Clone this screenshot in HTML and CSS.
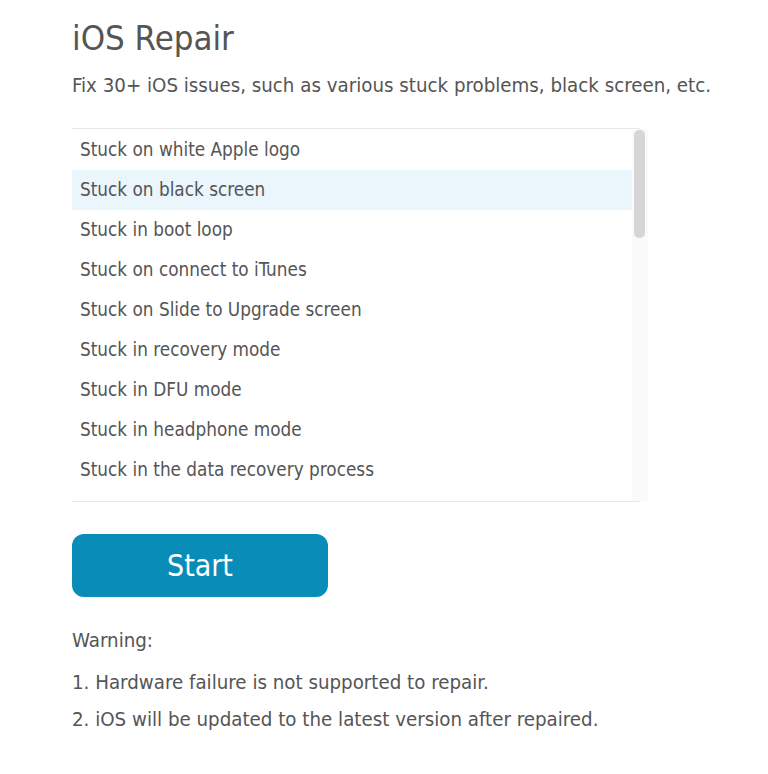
FILE: index.html
```html
<!DOCTYPE html>
<html>
<head>
<meta charset="utf-8">
<link rel="stylesheet" href="styles.css">
</head>
<body>
<div class="page">
  <h1 class="title">iOS Repair</h1>
  <p class="subtitle">Fix 30+ iOS issues, such as various stuck problems, black screen, etc.</p>
  <div class="list-frame">
    <div class="list-box">
      <ul class="list">
        <li class="item">Stuck on white Apple logo</li>
        <li class="item active">Stuck on black screen</li>
        <li class="item">Stuck in boot loop</li>
        <li class="item">Stuck on connect to iTunes</li>
        <li class="item">Stuck on Slide to Upgrade screen</li>
        <li class="item">Stuck in recovery mode</li>
        <li class="item">Stuck in DFU mode</li>
        <li class="item">Stuck in headphone mode</li>
        <li class="item">Stuck in the data recovery process</li>
      </ul>
      <div class="scrollbar"><div class="thumb"></div></div>
    </div>
  </div>
  <button class="start">Start</button>
  <div class="warning">
    <p class="warn-title">Warning:</p>
    <p class="warn-line first">1. Hardware failure is not supported to repair.</p>
    <p class="warn-line">2. iOS will be updated to the latest version after repaired.</p>
  </div>
</div>
</body>
</html>
```

FILE: styles.css
```css
html, body {
  margin: 0;
  padding: 0;
  background: #ffffff;
}
body {
  font-family: "DejaVu Sans Condensed", "DejaVu Sans", sans-serif;
  color: #555555;
}
.page {
  padding: 18px 0 0 72px;
}
.title {
  margin: 0;
  font-size: 34.5px;
  font-weight: normal;
  line-height: 40px;
  color: #555555;
}
.subtitle {
  margin: 15px 0 0;
  font-size: 20.3px;
  line-height: 24px;
  white-space: nowrap;
}
.list-frame {
  margin-top: 31px;
  width: 568px;
  border-top: 1px solid #e8e8e8;
  border-bottom: 1px solid #e8e8e8;
}
.list-box {
  display: flex;
  width: 576px;
  height: 372px;
  overflow: hidden;
}
.list {
  flex: 1;
  list-style: none;
  margin: 0;
  padding: 1px 0 0;
}
.item {
  height: 40px;
  line-height: 40px;
  padding-left: 8px;
  font-size: 18.8px;
  white-space: nowrap;
}
.item.active {
  background: #eaf5fc;
}
.scrollbar {
  width: 16px;
  background: #fafafa;
  padding: 1px 3px 0 2px;
  box-sizing: border-box;
}
.thumb {
  height: 108px;
  background: #d6d6d6;
  border-radius: 5px;
}
.start {
  display: block;
  margin-top: 32px;
  width: 256px;
  height: 63px;
  border: none;
  border-radius: 12px;
  background: #0a8cb9;
  color: #ffffff;
  font-family: "DejaVu Sans Condensed", "DejaVu Sans", sans-serif;
  font-size: 30px;
  padding: 0;
}
.warning {
  margin-top: 31px;
}
.warn-title,
.warn-line {
  margin: 0 0 13px;
  font-size: 20.3px;
  line-height: 24px;
  white-space: nowrap;
}
.warn-title {
  margin-bottom: 18px;
}
```
